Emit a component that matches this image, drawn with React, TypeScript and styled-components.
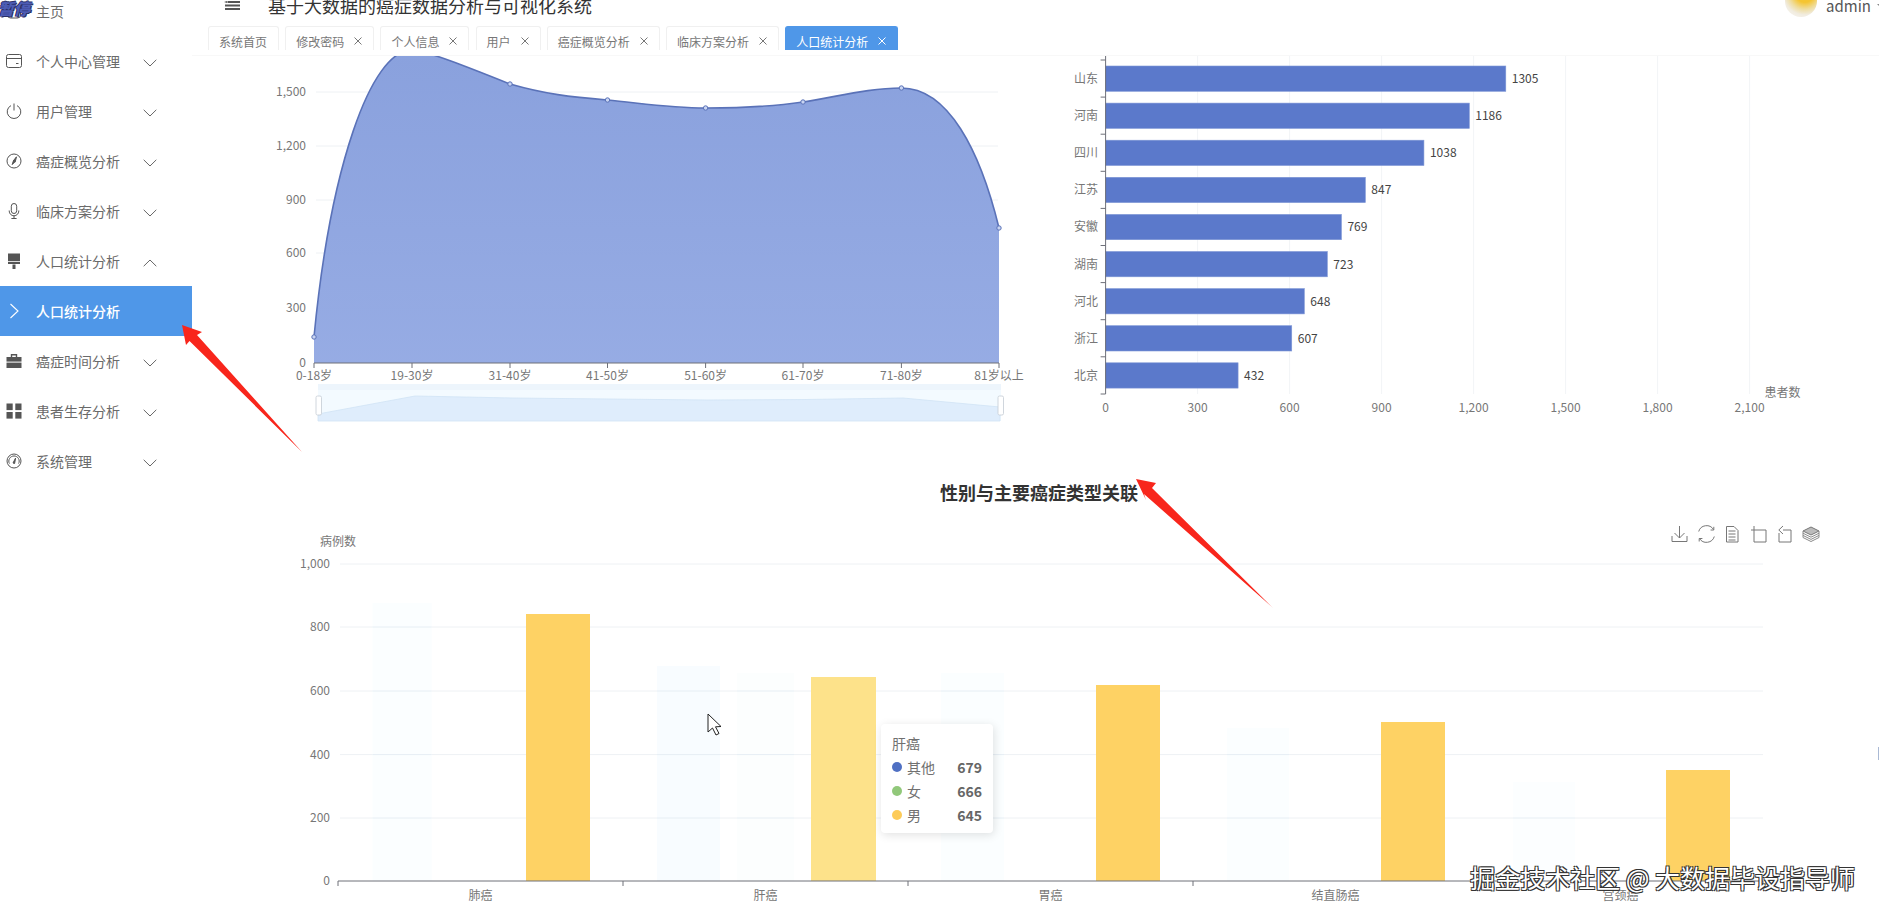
import React from 'react';
import styled, { createGlobalStyle } from 'styled-components';

const FONT = '"Noto Sans CJK SC", "Noto Sans", sans-serif';

const GlobalStyle = createGlobalStyle`
    html, body {
        margin: 0;
        height: 100%;
        overflow: hidden;
        background: #fff;
        font-family: ${FONT};
    }
    #root { height: 100%; }
`;

/* ---- menu icons ---- */
const CardIcon = () => (
    <svg width="16" height="16" viewBox="0 0 16 16" fill="none" stroke="currentColor" strokeWidth="1">
        <rect x="0.5" y="1.5" width="15" height="13" rx="2" />
        <path d="M0.5 5.5h15M10 10.5h2.5" />
    </svg>
);
const PowerIcon = () => (
    <svg width="16" height="16" viewBox="0 0 16 16" fill="none" stroke="currentColor" strokeWidth="1">
        <path d="M8 0.5V7.5" />
        <path d="M5 2.6A6.8 6.8 0 1 0 11 2.6" />
    </svg>
);
const CompassIcon = () => (
    <svg width="16" height="16" viewBox="0 0 16 16" fill="none" stroke="currentColor" strokeWidth="1">
        <circle cx="8" cy="8" r="7" />
        <path d="M10.5 3.8 L9.2 9 L7 8.2 Z" fill="currentColor" />
        <path d="M7.2 8.4 L6.2 11.6 L8.6 9.2 Z" fill="currentColor" />
    </svg>
);
const MicIcon = () => (
    <svg width="16" height="16" viewBox="0 0 16 16" fill="none" stroke="currentColor" strokeWidth="1">
        <rect x="5.3" y="0.5" width="5.4" height="10" rx="2.7" />
        <path d="M3.2 7.5V8a4.8 4.8 0 0 0 9.6 0V7.5M8 12.8V15.5M5.4 15.5H10.6" />
    </svg>
);
const RollerIcon = () => (
    <svg width="16" height="16" viewBox="0 0 16 16" fill="currentColor">
        <rect x="2" y="0.5" width="12" height="7.5" />
        <rect x="2" y="8.8" width="12" height="2.2" />
        <rect x="6.5" y="11.5" width="3" height="4.5" />
    </svg>
);
const CaseIcon = () => (
    <svg width="16" height="16" viewBox="0 0 16 16" fill="currentColor">
        <path d="M5.5 4V1.8h5V4" fill="none" stroke="currentColor" strokeWidth="1.4" />
        <rect x="0.5" y="4" width="15" height="4.6" />
        <rect x="0.5" y="9.6" width="15" height="5.4" />
    </svg>
);
const GridIcon = () => (
    <svg width="16" height="16" viewBox="0 0 16 16" fill="currentColor">
        <rect x="0.5" y="0.5" width="6.2" height="6.6" />
        <rect x="9.3" y="0.5" width="6.2" height="6.6" />
        <rect x="0.5" y="9" width="6.2" height="6.6" />
        <rect x="9.3" y="9" width="6.2" height="6.6" />
    </svg>
);
const GaugeIcon = () => (
    <svg width="16" height="16" viewBox="0 0 16 16" fill="none" stroke="currentColor" strokeWidth="1">
        <circle cx="8" cy="8" r="7" />
        <path d="M3.4 10.6 A5.2 5.2 0 1 1 12.6 10.6" />
        <path d="M9.6 5 L8.6 10.5 L7 10 Z" fill="currentColor" />
    </svg>
);
const HomeIcon = () => (
    <svg width="16" height="16" viewBox="0 0 16 16" fill="none" stroke="currentColor" strokeWidth="1">
        <rect x="1.5" y="-4" width="13" height="19" rx="3" />
    </svg>
);

const Chevron: React.FC<{ up?: boolean }> = ({ up }) => (
    <ChevronSvg $up={up} width="14" height="8" viewBox="0 0 14 8" fill="none" stroke="currentColor" strokeWidth="1">
        <polyline points="0.7,0.8 7,7 13.3,0.8" />
    </ChevronSvg>
);

const ChevronRight = () => (
    <svg width="16" height="16" viewBox="0 0 16 16" fill="none" stroke="currentColor" strokeWidth="1.1">
        <polyline points="4.5,1 12,8 4.5,15" />
    </svg>
);

const CloseMark = () => (
    <CloseSvg width="8" height="8" viewBox="0 0 8 8" stroke="currentColor" strokeWidth="1">
        <path d="M0.5 0.5L7.5 7.5M7.5 0.5L0.5 7.5" />
    </CloseSvg>
);

/* ---- data ---- */
const menu = [
    { label: '主页', icon: <HomeIcon />, plain: true },
    { label: '个人中心管理', icon: <CardIcon /> },
    { label: '用户管理', icon: <PowerIcon /> },
    { label: '癌症概览分析', icon: <CompassIcon /> },
    { label: '临床方案分析', icon: <MicIcon /> },
    { label: '人口统计分析', icon: <RollerIcon />, open: true },
    { label: '人口统计分析', icon: <ChevronRight />, active: true, plain: true },
    { label: '癌症时间分析', icon: <CaseIcon /> },
    { label: '患者生存分析', icon: <GridIcon /> },
    { label: '系统管理', icon: <GaugeIcon /> },
];

const tabs = [
    { label: '系统首页', fixed: true },
    { label: '修改密码' },
    { label: '个人信息' },
    { label: '用户' },
    { label: '癌症概览分析' },
    { label: '临床方案分析' },
    { label: '人口统计分析', active: true },
];

const ageTicks = [
    { x: 314, label: '0-18岁' },
    { x: 412, label: '19-30岁' },
    { x: 510, label: '31-40岁' },
    { x: 607.5, label: '41-50岁' },
    { x: 705.6, label: '51-60岁' },
    { x: 803, label: '61-70岁' },
    { x: 901.4, label: '71-80岁' },
    { x: 999, label: '81岁以上' },
];
const agePoints = [[314, 337], [510, 84], [607.5, 100], [705.6, 108], [803, 102], [901.4, 88], [999, 228]];
const AGE_CURVE = 'M314 337 C330 170 370 50 412 50 C425 50 470 68 510 84 C545 94 570 97 607.5 100 C640 103 670 108 705.6 108 C740 108 770 107 803 102 C840 96 870 88 901.4 88 C948 88 980 150 999 228';

const provinces = [
    { name: '山东', value: 1305 },
    { name: '河南', value: 1186 },
    { name: '四川', value: 1038 },
    { name: '江苏', value: 847 },
    { name: '安徽', value: 769 },
    { name: '湖南', value: 723 },
    { name: '河北', value: 648 },
    { name: '浙江', value: 607 },
    { name: '北京', value: 432 },
];

const cancers = [
    { name: '肺癌', ghost: [{ x1: 372.6, x2: 431.6, top: 603, fill: '#fbfeff' }], male: [526, 590, 614] },
    { name: '肝癌', ghost: [{ x1: 657, x2: 720, top: 666, fill: '#f8fcff' }, { x1: 737, x2: 794, top: 673, fill: '#fcfefe' }], male: [811, 876, 677], hover: true },
    { name: '胃癌', ghost: [{ x1: 941, x2: 1004, top: 673, fill: '#fbfeff' }], male: [1096, 1160, 685] },
    { name: '结直肠癌', ghost: [{ x1: 1227, x2: 1289, top: 728, fill: '#fbfeff' }], male: [1381, 1445, 722] },
    { name: '宫颈癌', ghost: [{ x1: 1513, x2: 1575, top: 782, fill: '#fcfeff' }], male: [1666, 1730, 770] },
];

const caseTicks = [
    { y: 564, label: '1,000' },
    { y: 627, label: '800' },
    { y: 691, label: '600' },
    { y: 754.6, label: '400' },
    { y: 818, label: '200' },
    { y: 881, label: '0' },
];

const tooltipRows = [
    { name: '其他', value: 679, color: '#4f70c3' },
    { name: '女', value: 666, color: '#91c87a' },
    { name: '男', value: 645, color: '#fdcb58' },
];

const App: React.FC = () => {
    return (
        <Page>
            <GlobalStyle />
            <Sidebar>
                <Logo>暂停</Logo>
                {menu.map((item, i) => (
                    <MenuRow key={i} $active={item.active}>
                        <MenuIcon $active={item.active}>{item.icon}</MenuIcon>
                        <span>{item.label}</span>
                        {!item.plain && <Chevron up={item.open} />}
                    </MenuRow>
                ))}
            </Sidebar>

            <Main>
                <TopBar>
                    <svg width="16" height="9" viewBox="0 0 16 9" fill="#555">
                        <rect x="3.5" y="0" width="12.5" height="2" />
                        <path d="M0 1 L3 0 V2 Z" />
                        <rect x="1" y="3.5" width="15" height="2" />
                        <rect x="1" y="7" width="15" height="2" />
                    </svg>
                    <SystemTitle>基于大数据的癌症数据分析与可视化系统</SystemTitle>
                    <UserBox>
                        <Avatar />
                        <span>admin</span>
                        <Caret />
                    </UserBox>
                </TopBar>

                <TabStrip>
                    {tabs.map((tab) => (
                        <Tab key={tab.label} $active={tab.active}>
                            {tab.label}
                            {!tab.fixed && <CloseMark />}
                        </Tab>
                    ))}
                </TabStrip>

                <Content>
                    <TopCharts>
                        {/* age distribution */}
                        <svg width="848" height="370" viewBox="192 56 848 370">
                            <defs>
                                <linearGradient id="ageFill" x1="0" y1="0" x2="0" y2="1">
                                    <stop offset="0" stopColor="#869edc" />
                                    <stop offset="1" stopColor="#93a9e3" />
                                </linearGradient>
                            </defs>
                            {[[92, '1,500'], [146, '1,200'], [200, '900'], [253, '600'], [308, '300'], [363, '0']].map(([y, label]) => (
                                <g key={label}>
                                    {y !== 363 && <GridLine x1="316" x2="998" y1={y} y2={y} />}
                                    <AxisText x="306" y={Number(y) + 4} textAnchor="end">{label}</AxisText>
                                </g>
                            ))}
                            <path d={`${AGE_CURVE} L999 363 L314 363 Z`} fill="url(#ageFill)" opacity="0.97" />
                            <path d={AGE_CURVE} fill="none" stroke="#5a72b8" strokeWidth="1.6" />
                            {agePoints.map(([x, y]) => (
                                <circle key={x} cx={x} cy={y} r="2.2" fill="#c9d5f2" stroke="#5a72b8" strokeWidth="1" />
                            ))}
                            <AxisLine x1="314" x2="999" y1="363" y2="363" />
                            {ageTicks.map((t) => (
                                <g key={t.label}>
                                    <AxisLine x1={t.x} x2={t.x} y1="363" y2="368" />
                                    <AxisText x={t.x} y="380" textAnchor="middle">{t.label}</AxisText>
                                </g>
                            ))}
                            <rect x="318" y="384" width="683" height="37" fill="#f3faff" />
                            <rect x="318" y="384" width="683" height="6" fill="#edf5fc" />
                            <path d="M318 414 L415 396 L513 398 L610 399 L708 400 L805 399.5 L903 398 L1000 407 V421 H318 Z" fill="#dfedfc" stroke="#d0e3f5" strokeWidth="0.8" />
                            <Handle x="316" y="396" width="5.5" height="19" rx="1.5" />
                            <Handle x="998" y="396" width="5.5" height="19" rx="1.5" />
                        </svg>

                        {/* patients per province */}
                        <svg width="839" height="370" viewBox="1040 56 839 370">
                            {[0, 300, 600, 900, 1200, 1500, 1800, 2100].map((v) => {
                                const x = 1105.6 + (v * 92) / 300;
                                return (
                                    <g key={v}>
                                        {v > 0 && <FaintLine x1={x} x2={x} y1="56" y2="394" />}
                                        <AxisText x={x} y="412" textAnchor="middle">{v.toLocaleString('en-US')}</AxisText>
                                    </g>
                                );
                            })}
                            {provinces.map((p, i) => {
                                const y = 66 + i * 37.1;
                                return (
                                    <g key={p.name}>
                                        <rect x="1105.6" y={y} width={(p.value * 92) / 300} height="25.3" fill="#5b79cb" stroke="#7f97d6" strokeWidth="0.6" />
                                        <AxisLine x1="1100.6" x2="1105.6" y1={y - 6} y2={y - 6} />
                                        <AxisText x="1098" y={y + 17} textAnchor="end">{p.name}</AxisText>
                                        <ValueText x={1105.6 + (p.value * 92) / 300 + 6} y={y + 17}>{p.value}</ValueText>
                                    </g>
                                );
                            })}
                            <AxisLine x1="1100.6" x2="1105.6" y1="394" y2="394" />
                            <AxisLine x1="1105.6" x2="1105.6" y1="56" y2="394" />
                            <AxisText x="1764.5" y="397">患者数</AxisText>
                        </svg>
                    </TopCharts>

                    <SectionTitle>性别与主要癌症类型关联</SectionTitle>

                    <BottomChart>
                        <svg width="1687" height="411" viewBox="192 504 1687 411">
                            {caseTicks.map((t) => (
                                <g key={t.label}>
                                    {t.y !== 881 && <GridLine x1="340" x2="1763" y1={t.y} y2={t.y} />}
                                    <AxisText x="330" y={t.y + 4} textAnchor="end">{t.label}</AxisText>
                                </g>
                            ))}
                            <AxisText x="338" y="546" textAnchor="middle">病例数</AxisText>
                            {cancers.map((c, i) => (
                                <g key={c.name}>
                                    {c.ghost.map((g) => (
                                        <g key={g.x1}>
                                            <rect x={g.x1} y={g.top} width={g.x2 - g.x1} height={881 - g.top} fill={g.fill} />
                                            {caseTicks.filter((t) => t.y > g.top && t.y < 881).map((t) => (
                                                <line key={t.y} x1={g.x1} x2={g.x2} y1={t.y} y2={t.y} stroke="#e6eef4" />
                                            ))}
                                        </g>
                                    ))}
                                    <rect x={c.male[0]} y={c.male[2]} width={c.male[1] - c.male[0]} height={881 - c.male[2]} fill={c.hover ? '#fde28a' : '#fed264'} />
                                    <AxisLine x1={338 + i * 285} x2={338 + i * 285} y1="881" y2="886" />
                                    <AxisText x={480.5 + i * 285} y="900" textAnchor="middle">{c.name}</AxisText>
                                </g>
                            ))}
                            <AxisLine x1="338" x2="1763" y1="881" y2="881" />
                            <AxisLine x1="1763" x2="1763" y1="881" y2="886" />

                            {/* toolbox */}
                            <g fill="none" stroke="#777" strokeWidth="1">
                                <path d="M1679.5 526V538M1674.5 533L1679.5 538L1684.5 533M1672 536V541.5H1687V536" />
                                <path d="M1698.7 531.5A8.2 8.2 0 0 1 1713.5 529.5M1713.8 526.8V530H1710.6M1714.3 536.5A8.2 8.2 0 0 1 1699.5 538.5M1699.2 541.5V538.5H1702.4" />
                                <path d="M1726.5 526.5H1734L1738 530.5V542H1726.5ZM1728.5 531H1735.5M1728.5 534H1735.5M1728.5 537H1735.5M1728.5 540H1735.5" />
                                <path d="M1754 526V542H1766V530H1751" />
                                <path d="M1783 530H1791V542H1779V533M1783 526L1778.8 530L1783 534" />
                                <path d="M1811 527L1819 531L1811 535L1803 531Z" fill="#bbb" />
                                <path d="M1803 531V537.5L1811 541.5L1819 537.5V531M1803 533.2L1811 537.2L1819 533.2M1803 535.4L1811 539.4L1819 535.4" stroke="#8a8a8a" />
                            </g>
                        </svg>

                        <Tooltip>
                            <TooltipTitle>肝癌</TooltipTitle>
                            {tooltipRows.map((row) => (
                                <TooltipRow key={row.name}>
                                    <Dot $color={row.color} />
                                    <span>{row.name}</span>
                                    <b>{row.value}</b>
                                </TooltipRow>
                            ))}
                        </Tooltip>
                    </BottomChart>
                </Content>
            </Main>

            {/* red arrows and mouse pointer recorded over the page */}
            <Annotations width="1879" height="915" viewBox="0 0 1879 915">
                <polygon points="182,325 202,332 197,335 302,452 189.5,341 186,345" fill="#f8261c" />
                <polygon points="1136,479 1156,483 1152,488 1273,608 1144,494 1146,500" fill="#f8261c" />
                <path d="M708 714 L708 732 L712.5 728 L716 735 L719 733.5 L715.5 726.8 L721 726.5 Z" fill="#fff" stroke="#222" strokeWidth="1" />
            </Annotations>

            <Watermark>掘金技术社区 @ 大数据毕设指导师</Watermark>
            <EdgeMark />
        </Page>
    );
};

const Page = styled.div`
    position: relative;
    display: flex;
    width: 1879px;
    height: 915px;
    overflow: hidden;
    background: #fff;
`;

const Sidebar = styled.aside`
    position: relative;
    flex: 0 0 192px;
    margin-top: -14px;
`;

const Logo = styled.div`
    position: absolute;
    left: -2px;
    top: 10px;
    font-size: 16px;
    line-height: 24px;
    font-weight: 900;
    font-style: italic;
    color: #4d5cb4;
    text-shadow: 1px 1px 0 #2a2f66, -1px 0 0 #2a2f66, 0 -1px 0 #2a2f66;
    z-index: 1;
`;

const MenuRow = styled.div<{ $active?: boolean }>`
    display: flex;
    align-items: center;
    height: 50px;
    padding: 0 35px 0 6px;
    font-size: 14px;
    color: ${(p) => (p.$active ? '#fff' : '#6a6a6a')};
    font-weight: ${(p) => (p.$active ? 500 : 400)};
    background: ${(p) => (p.$active ? '#4f97e8' : 'transparent')};
`;

const MenuIcon = styled.span<{ $active?: boolean }>`
    display: flex;
    align-items: center;
    justify-content: center;
    width: 16px;
    height: 16px;
    margin-right: 14px;
    color: ${(p) => (p.$active ? '#fff' : '#555')};
`;

const ChevronSvg = styled.svg<{ $up?: boolean }>`
    margin-left: auto;
    margin-top: 4px;
    color: #666;
    transform: ${(p) => (p.$up ? 'rotate(180deg)' : 'none')};
`;

const Main = styled.main`
    flex: 1;
    min-width: 0;
    display: flex;
    flex-direction: column;
`;

const TopBar = styled.header`
    display: flex;
    align-items: center;
    height: 10px;
    margin-bottom: 16px;
    padding-left: 32px;
    gap: 28px;
`;

const SystemTitle = styled.h1`
    margin: 0;
    font-size: 18px;
    font-weight: 400;
    color: #333;
    white-space: nowrap;
`;

const UserBox = styled.div`
    display: flex;
    align-items: center;
    gap: 9px;
    margin-left: auto;
    font-size: 15px;
    color: #555;
`;

const Avatar = styled.div`
    width: 32px;
    height: 32px;
    margin-top: -8px;
    border-radius: 50%;
    background:
        radial-gradient(circle at 25% 15%, #6b6038 0 8%, transparent 14%),
        radial-gradient(circle at 62% 25%, #f5c531 0 30%, #efdd9f 52%, #f1ece0 70%, #fbfaf7 100%);
`;

const Caret = styled.i`
    width: 0;
    height: 0;
    margin: 0 -4px 0 -3px;
    border-left: 3px solid transparent;
    border-right: 3px solid transparent;
    border-top: 3px solid #888;
`;

const TabStrip = styled.nav`
    display: flex;
    gap: 6.2px;
    height: 24px;
    padding: 0 0 5px 16px;
    border-bottom: 1px solid #f8f8f8;
`;

const Tab = styled.div<{ $active?: boolean }>`
    display: flex;
    align-items: center;
    padding: 6px 11px 0 10px;
    font-size: 12px;
    white-space: nowrap;
    border: 1px solid ${(p) => (p.$active ? '#4f97e8' : '#f0f0f0')};
    border-bottom: 0;
    border-radius: 3px 3px 0 0;
    box-sizing: border-box;
    color: ${(p) => (p.$active ? '#fff' : '#777')};
    background: ${(p) => (p.$active ? '#4f97e8' : '#fff')};
`;

const CloseSvg = styled.svg`
    margin: -2px 0 0 10px;
`;

const Content = styled.div`
    flex: 1;
    min-height: 0;
    overflow: hidden;
    svg { display: block; }
`;

const TopCharts = styled.section`
    display: flex;
`;

const SectionTitle = styled.h2`
    margin: 0;
    padding: 54px 0 0 7px;
    height: 24px;
    line-height: 24px;
    text-align: center;
    font-size: 18px;
    font-weight: 700;
    color: #333;
`;

const BottomChart = styled.section`
    position: relative;
`;

const GridLine = styled.line`
    stroke: #eef1f4;
    stroke-width: 1;
`;

const FaintLine = styled.line`
    stroke: #f2f4f7;
    stroke-width: 1;
`;

const AxisLine = styled.line`
    stroke: #6e7079;
    stroke-width: 1;
`;

const AxisText = styled.text`
    font-family: ${FONT};
    font-size: 12px;
    fill: #777;
`;

const ValueText = styled.text`
    font-family: ${FONT};
    font-size: 12px;
    fill: #444;
`;

const Handle = styled.rect`
    fill: #fff;
    stroke: #c4ccd4;
    stroke-width: 0.8;
`;

const Tooltip = styled.div`
    position: absolute;
    left: 689px;
    top: 220px;
    box-sizing: border-box;
    width: 112px;
    height: 109px;
    padding: 7px 11px 0;
    background: #fff;
    border-radius: 4px;
    box-shadow: 1px 2px 10px rgba(0, 0, 0, 0.12);
    font-size: 14px;
    color: #707070;
`;

const TooltipTitle = styled.div`
    height: 24px;
    line-height: 24px;
`;

const TooltipRow = styled.div`
    display: flex;
    align-items: center;
    height: 24px;
    b {
        margin-left: auto;
        font-weight: 700;
        color: #666;
    }
`;

const Dot = styled.i<{ $color: string }>`
    width: 10px;
    height: 10px;
    margin-right: 5px;
    border-radius: 50%;
    background: ${(p) => p.$color};
`;

const Annotations = styled.svg`
    position: absolute;
    left: 0;
    top: 0;
    pointer-events: none;
`;

const Watermark = styled.div`
    position: absolute;
    right: 24px;
    bottom: 23px;
    line-height: 30px;
    font-size: 25px;
    white-space: nowrap;
    color: #fff;
    text-shadow: 1px 1px 0 #333, -1px 1px 0 #333, 1px -1px 0 #333, -1px -1px 0 #333;
`;

const EdgeMark = styled.div`
    position: absolute;
    right: 0;
    top: 747px;
    width: 1px;
    height: 13px;
    background: #aab9d4;
`;

export default App;
